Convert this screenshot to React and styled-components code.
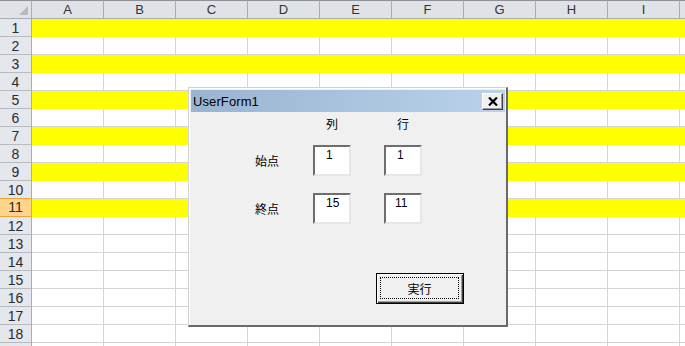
import React from "react";
import styled, { createGlobalStyle } from "styled-components";

const Global = createGlobalStyle`
  html, body { margin: 0; padding: 0; background: #fff; }
  body { font-family: "Liberation Sans", Arial, sans-serif; }
`;

const Screen = styled.div`
  position: relative;
  width: 685px;
  height: 346px;
  overflow: hidden;
  background: #fff;
`;

const Sheet = styled.div`
  display: grid;
  grid-template-columns: 32px repeat(10, 72px);
  grid-template-rows: 19px;
  grid-auto-rows: 18px;
  width: 752px;
`;

const Corner = styled.div`
  position: relative;
  box-sizing: border-box;
  background: #dfe3e8;
  border-top: 1px solid #8e9297;
  border-right: 1px solid #a9adb2;
  border-bottom: 1px solid #a9adb2;
  &::after {
    content: "";
    position: absolute;
    right: 3px;
    bottom: 3px;
    width: 0;
    height: 0;
    border-left: 9px solid transparent;
    border-bottom: 9px solid #b6babf;
  }
`;

const ColHead = styled.div`
  box-sizing: border-box;
  background: #dfe3e8;
  border-top: 1px solid #8e9297;
  border-right: 1px solid #a9adb2;
  border-bottom: 1px solid #a9adb2;
  color: #333;
  font-size: 13px;
  line-height: 17px;
  text-align: center;
`;

const RowHead = styled.div`
  box-sizing: border-box;
  background: ${(p) => (p.$selected ? "#ffd58c" : "#e4e7eb")};
  border-right: 1px solid ${(p) => (p.$selected ? "#f0a33c" : "#a9adb2")};
  border-bottom: 1px solid ${(p) => (p.$selected ? "#f0a33c" : "#b7bbc0")};
  box-shadow: ${(p) => (p.$selected ? "inset 0 1px 0 #f0a33c" : "none")};
  margin-top: ${(p) => (p.$selected ? "-1px" : "0")};
  height: ${(p) => (p.$selected ? "19px" : "18px")};
  color: #2b2b2b;
  font-size: 14px;
  line-height: 18px;
  text-align: center;
`;

const Cell = styled.div`
  box-sizing: border-box;
  background: ${(p) => (p.$fill ? "#ffff00" : "#fff")};
  border-right: 1px solid ${(p) => (p.$fill ? "#ffff00" : "#d4d4d4")};
  border-bottom: 1px solid ${(p) => (p.$fill ? "#ffff00" : "#d4d4d4")};
`;

const Dialog = styled.div`
  position: absolute;
  left: 188px;
  top: 87px;
  width: 320px;
  height: 240px;
  box-sizing: border-box;
  background: #f0f0f0;
  border-top: 1px solid #d2d2d2;
  border-left: 1px solid #d2d2d2;
  border-right: 2px solid #6a6a6a;
  border-bottom: 2px solid #6a6a6a;
  box-shadow: inset 1px 1px 0 #ffffff;
  padding: 2px 1px 0 2px;
  display: flex;
  flex-direction: column;
`;

const TitleBar = styled.div`
  height: 22px;
  flex: none;
  display: flex;
  align-items: center;
  justify-content: space-between;
  padding: 0 2px 0 2px;
  background: linear-gradient(to right, #99b4d1, #bad2ea);
`;

const TitleText = styled.span`
  font-family: "Liberation Sans", Arial, sans-serif;
  font-size: 13px;
  color: #000;
  letter-spacing: 0.1px;
`;

const CloseButton = styled.div`
  width: 21px;
  height: 17px;
  box-sizing: border-box;
  background: #f0f0f0;
  border-top: 1px solid #fff;
  border-left: 1px solid #fff;
  border-right: 1px solid #404040;
  border-bottom: 1px solid #404040;
  box-shadow: inset -1px -1px 0 #a0a0a0;
  display: flex;
  align-items: center;
  justify-content: center;
`;

const Body = styled.div`
  flex: 1;
  display: flex;
  flex-direction: column;
  font-family: "Noto Sans CJK JP", "Liberation Sans", sans-serif;
  font-size: 12px;
  color: #000;
`;

const Row = styled.div`
  display: grid;
  grid-template-columns: 64px 58px 38px 33px 38px;
  align-items: center;
  height: ${(p) => p.$h}px;
  margin-top: ${(p) => p.$mt}px;
`;

const Label = styled.div`
  grid-column: ${(p) => p.$col};
  text-align: ${(p) => (p.$center ? "center" : "left")};
  line-height: 1;
`;

const TextBox = styled.div`
  grid-column: ${(p) => p.$col};
  height: 31px;
  box-sizing: border-box;
  background: #fff;
  border-top: 2px solid #6e6e6e;
  border-left: 2px solid #6e6e6e;
  border-right: 2px solid #e6e6e6;
  border-bottom: 2px solid #e6e6e6;
  font-family: "Liberation Sans", Arial, sans-serif;
  font-size: 12px;
  line-height: 13px;
  padding: 2px 0 0 ${(p) => p.$pl}px;
`;

const ButtonRow = styled.div`
  display: flex;
  padding-left: 185px;
  margin-top: 49px;
`;

const Button = styled.div`
  width: 88px;
  height: 31px;
  box-sizing: border-box;
  background: #f0f0f0;
  border: 1px solid #000;
  box-shadow: inset 1px 1px 0 #fff, inset -1px -1px 0 #404040, inset -2px -2px 0 #a0a0a0;
  padding: 3px 4px 4px 3px;
  display: flex;
`;

const Focus = styled.div`
  flex: 1;
  border: 1px dotted #000;
  display: flex;
  align-items: center;
  justify-content: center;
  font-size: 12px;
`;

const cols = ["A", "B", "C", "D", "E", "F", "G", "H", "I", ""];
const rows = Array.from({ length: 19 }, (_, i) => i + 1);

export default function App() {
  return (
    <>
      <Global />
      <Screen>
        <Sheet>
          <Corner />
          {cols.map((c, i) => (
            <ColHead key={i}>{c}</ColHead>
          ))}
          {rows.map((r) => (
            <React.Fragment key={r}>
              <RowHead $selected={r === 11}>{r <= 18 ? r : ""}</RowHead>
              {cols.map((c, i) => (
                <Cell key={i} $fill={r % 2 === 1 && r <= 11} />
              ))}
            </React.Fragment>
          ))}
        </Sheet>
        <Dialog>
          <TitleBar>
            <TitleText>UserForm1</TitleText>
            <CloseButton>
              <svg width="10" height="9" viewBox="0 0 10 9">
                <path d="M1 0.5 L9 8.5 M9 0.5 L1 8.5" stroke="#000" strokeWidth="2.2" />
              </svg>
            </CloseButton>
          </TitleBar>
          <Body>
            <Row $h={24} $mt={0}>
              <Label $col={3} $center>列</Label>
              <Label $col={5} $center>行</Label>
            </Row>
            <Row $h={31} $mt={9}>
              <Label $col={2}>始点</Label>
              <TextBox $col={3} $pl={11}>1</TextBox>
              <TextBox $col={5} $pl={11}>1</TextBox>
            </Row>
            <Row $h={31} $mt={17}>
              <Label $col={2}>終点</Label>
              <TextBox $col={3} $pl={11}>15</TextBox>
              <TextBox $col={5} $pl={9}>11</TextBox>
            </Row>
            <ButtonRow>
              <Button>
                <Focus>実行</Focus>
              </Button>
            </ButtonRow>
          </Body>
        </Dialog>
      </Screen>
    </>
  );
}
